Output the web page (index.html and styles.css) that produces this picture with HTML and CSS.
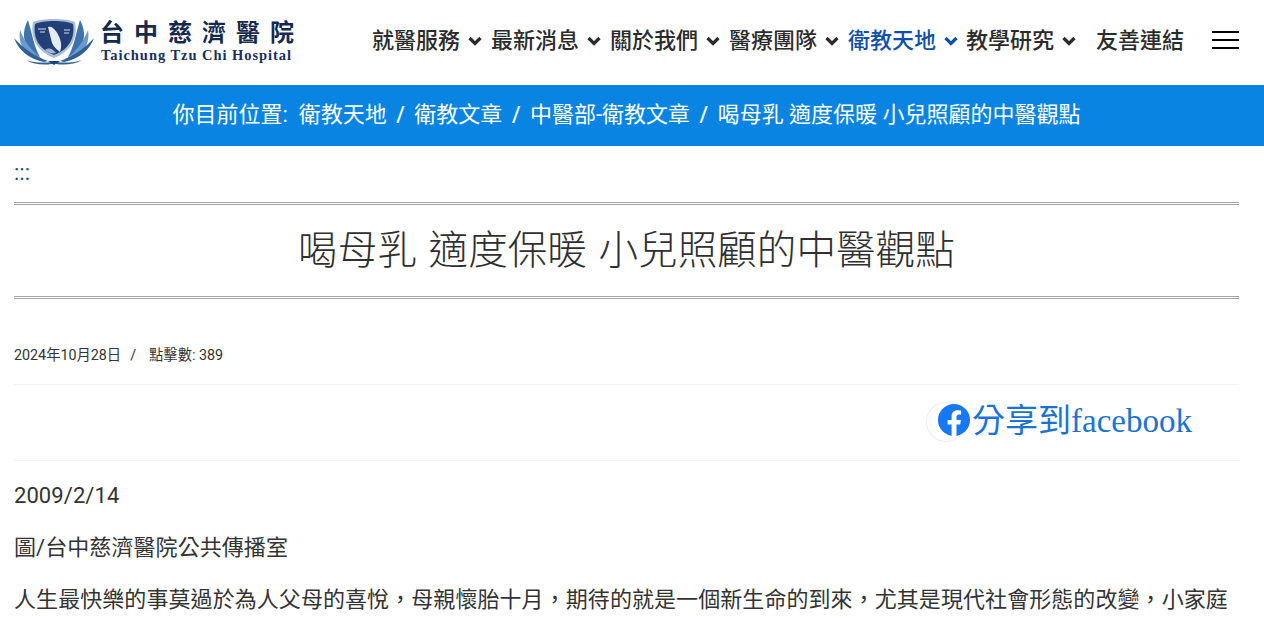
FILE: index.html
```html
<!DOCTYPE html>
<html lang="zh-Hant">
<head>
    <meta charset="UTF-8">
    <title>喝母乳 適度保暖 小兒照顧的中醫觀點</title>
    <link rel="stylesheet" href="styles.css">
</head>
<body>
    <header class="site-header">
        <a class="logo" href="#">
            <svg class="logo-mark" viewBox="0 0 80 46" width="80" height="46">
                <defs>
                    <g id="petals">
                        <path d="M14 1 C8 12 8 24 18 34 L26 38 C20 28 18 14 14 1 Z" fill="#3d72ad"/>
                        <path d="M6 11 C4 22 8 32 20 38 L28 40 C18 32 10 22 6 11 Z" fill="#6a9acb"/>
                        <path d="M0 19 C4 30 14 40 30 43 L34 42 C22 38 10 30 0 19 Z" fill="#2f6199"/>
                        <path d="M12 41 C20 46 30 46 38 45 L38 43 C30 44 20 44 12 41 Z" fill="#2f6199"/>
                    </g>
                </defs>
                <use href="#petals"/>
                <use href="#petals" transform="matrix(-1 0 0 1 80 0)"/>
                <path d="M34 42 L40 46 L46 42 Z" fill="#1d3f7c"/>
                <path d="M19 3 C26 -1 54 -1 61 3 C64 18 58 32 40 39 C22 32 16 18 19 3 Z" fill="#a9bdd6"/>
                <path d="M21 5 C28 1 52 1 59 5 C61 18 56 30 40 36 C24 30 19 18 21 5 Z" fill="#223f78"/>
                <path d="M34 8 C39 6 44 14 46 20 C48 26 47 30 46 33 C41 29 38 26 37 20 C36 16 35 12 34 8 Z" fill="#e4eaf2"/>
                <path d="M31 31 C35 28 39 30 42 34 C38 35 34 34 31 31 Z" fill="#9fb4d0"/>
                <path d="M24 10 H32 M26 13 H31 M50 11 H56 M50 14 H55" stroke="#d5deea" stroke-width="1.2"/>
            </svg>
            <span class="logo-text">
                <span class="logo-zh">台中慈濟醫院</span>
                <span class="logo-en">Taichung Tzu Chi Hospital</span>
            </span>
        </a>
        <nav class="main-nav">
            <a class="nav-item" href="#">就醫服務<svg class="caret" viewBox="0 0 14 10"><path d="M1.5 2 L7 7.5 L12.5 2"/></svg></a>
            <a class="nav-item" href="#">最新消息<svg class="caret" viewBox="0 0 14 10"><path d="M1.5 2 L7 7.5 L12.5 2"/></svg></a>
            <a class="nav-item" href="#">關於我們<svg class="caret" viewBox="0 0 14 10"><path d="M1.5 2 L7 7.5 L12.5 2"/></svg></a>
            <a class="nav-item tight" href="#">醫療團隊<svg class="caret" viewBox="0 0 14 10"><path d="M1.5 2 L7 7.5 L12.5 2"/></svg></a>
            <a class="nav-item active" href="#">衛教天地<svg class="caret" viewBox="0 0 14 10"><path d="M1.5 2 L7 7.5 L12.5 2"/></svg></a>
            <a class="nav-item" href="#">教學研究<svg class="caret" viewBox="0 0 14 10"><path d="M1.5 2 L7 7.5 L12.5 2"/></svg></a>
            <a class="nav-item plain" href="#">友善連結</a>
        </nav>
        <button class="burger" aria-label="menu"><span></span><span></span><span></span></button>
    </header>

    <div class="breadcrumb">
        <span class="here">你目前位置:</span>
        <a href="#">衛教天地</a><i>/</i>
        <a href="#">衛教文章</a><i>/</i>
        <a href="#">中醫部-衛教文章</a><i>/</i>
        <span>喝母乳 適度保暖 小兒照顧的中醫觀點</span>
    </div>

    <main class="content">
        <a class="accesskey" href="#">:::</a>
        <h1 class="page-title">喝母乳 適度保暖 小兒照顧的中醫觀點</h1>
        <div class="meta"><span>2024年10月28日</span><i>/</i><span>點擊數: 389</span></div>
        <div class="share">
            <a class="share-link" href="#">
                <svg class="fb-icon" viewBox="0 0 32 32" width="32" height="32">
                    <circle cx="16" cy="16" r="16" fill="#1877f2"/>
                    <path d="M22.2 20.6 L22.9 16 H18.5 V13 C18.5 11.7 19.1 10.5 21.1 10.5 H23.1 V6.6 C23.1 6.6 21.3 6.3 19.6 6.3 C16 6.3 13.6 8.5 13.6 12.5 V16 H9.6 V20.6 H13.6 V31.8 C14.4 31.9 15.2 32 16 32 C16.9 32 17.7 31.9 18.5 31.8 V20.6 Z" fill="#fff"/>
                </svg>
                <span class="share-text">分享到facebook</span>
            </a>
        </div>
        <article class="article">
            <p>2009/2/14</p>
            <p>圖/台中慈濟醫院公共傳播室</p>
            <p>人生最快樂的事莫過於為人父母的喜悅&#65292;母親懷胎十月&#65292;期待的就是一個新生命的到來&#65292;尤其是現代社會形態的改變&#65292;小家庭</p>
        </article>
    </main>
</body>
</html>
```

FILE: styles.css
```css
* {
    box-sizing: border-box;
}

html, body {
    margin: 0;
    height: 618px;
    overflow: hidden;
}

body {
    background: #fff;
    color: #333;
    font-family: Roboto, "Noto Sans CJK TC", sans-serif;
    font-size: 22px;
}

a {
    color: inherit;
    text-decoration: none;
}

/* header */
.site-header {
    display: flex;
    align-items: center;
    height: 85px;
    padding: 0 25px 5px 14px;
}

.logo {
    display: flex;
    align-items: center;
    gap: 6px;
    padding-top: 3px;
}

.logo-mark {
    flex: none;
}

.logo-text {
    display: flex;
    flex-direction: column;
}

.logo-zh {
    color: #15294f;
    font-size: 24px;
    font-weight: 700;
    line-height: 27px;
    letter-spacing: 10px;
    white-space: nowrap;
}

.logo-en {
    margin-left: 1px;
    color: #1a2f5c;
    font-family: "Liberation Serif", serif;
    font-size: 14.5px;
    font-weight: 700;
    line-height: 16px;
    letter-spacing: .95px;
    white-space: nowrap;
}

.main-nav {
    display: flex;
    align-items: center;
    margin-left: auto;
}

.nav-item {
    display: flex;
    align-items: center;
    margin-right: 9px;
    padding-bottom: 4px;
    color: #2b2b2b;
    font-weight: 500;
    white-space: nowrap;
}

.nav-item.active {
    margin-right: 8px;
    color: #0f4fa8;
}

.nav-item.plain {
    margin-left: 11px;
    margin-right: 0;
}

.caret {
    width: 14px;
    height: 10px;
    margin-top: 6px;
    margin-left: 8px;
    fill: none;
    stroke: currentColor;
    stroke-width: 3.2;
}

.burger {
    display: flex;
    flex-direction: column;
    gap: 6px;
    width: 27px;
    margin-left: 28px;
    padding: 0;
    border: 0;
    background: none;
}

.burger span {
    display: block;
    height: 2px;
    background: #000;
}

/* breadcrumb */
.breadcrumb {
    display: flex;
    align-items: baseline;
    justify-content: center;
    height: 61px;
    padding: 11px 11px 0 0;
    background: #0984e3;
    color: #fff;
    white-space: pre;
}

.breadcrumb .here {
    margin-right: 11px;
}

.breadcrumb i {
    margin: 0 9.5px;
    font-style: normal;
    font-weight: 500;
}

/* content */
.content {
    padding: 0 25px 0 14px;
}

.accesskey {
    display: block;
    height: 56px;
    padding-top: 13px;
    color: #1c4f8c;
    font-size: 22px;
    line-height: 27px;
}

.page-title {
    margin: 0;
    padding: 23px 0;
    height: 97px;
    border-top: 3px double #a5a5a5;
    border-bottom: 3px double #a5a5a5;
    color: #2f2f2f;
    font-size: 39.6px;
    font-weight: 300;
    line-height: 46px;
    word-spacing: 2px;
    text-align: center;
}

.meta {
    display: flex;
    align-items: baseline;
    height: 86px;
    padding-top: 44px;
    border-bottom: 1px solid #f2f2f2;
    color: #333;
    font-size: 14.3px;
}

.meta i {
    margin: 0 13px 0 9px;
    font-style: normal;
}

.share {
    display: flex;
    align-items: center;
    height: 76px;
    padding-left: 924px;
    border-bottom: 1px solid #f2f2f2;
}

.share-link {
    display: flex;
    align-items: center;
    position: relative;
    gap: 2px;
    color: #1a73d4;
    font-family: "Liberation Serif", "Noto Sans CJK TC", serif;
    font-size: 33px;
    line-height: 40px;
    white-space: nowrap;
}

.share-link::before {
    content: "";
    position: absolute;
    left: -12px;
    top: 1px;
    width: 38px;
    height: 38px;
    border: 1px solid #eee;
    border-radius: 50%;
}

.share-text {
    padding-bottom: 4px;
}

.fb-icon {
    position: relative;
    flex: none;
    margin-bottom: 6px;
}

.article {
    padding-top: 17px;
}

.article p {
    margin: 0 0 16px;
    line-height: 36px;
    letter-spacing: .07px;
    white-space: nowrap;
}
```
